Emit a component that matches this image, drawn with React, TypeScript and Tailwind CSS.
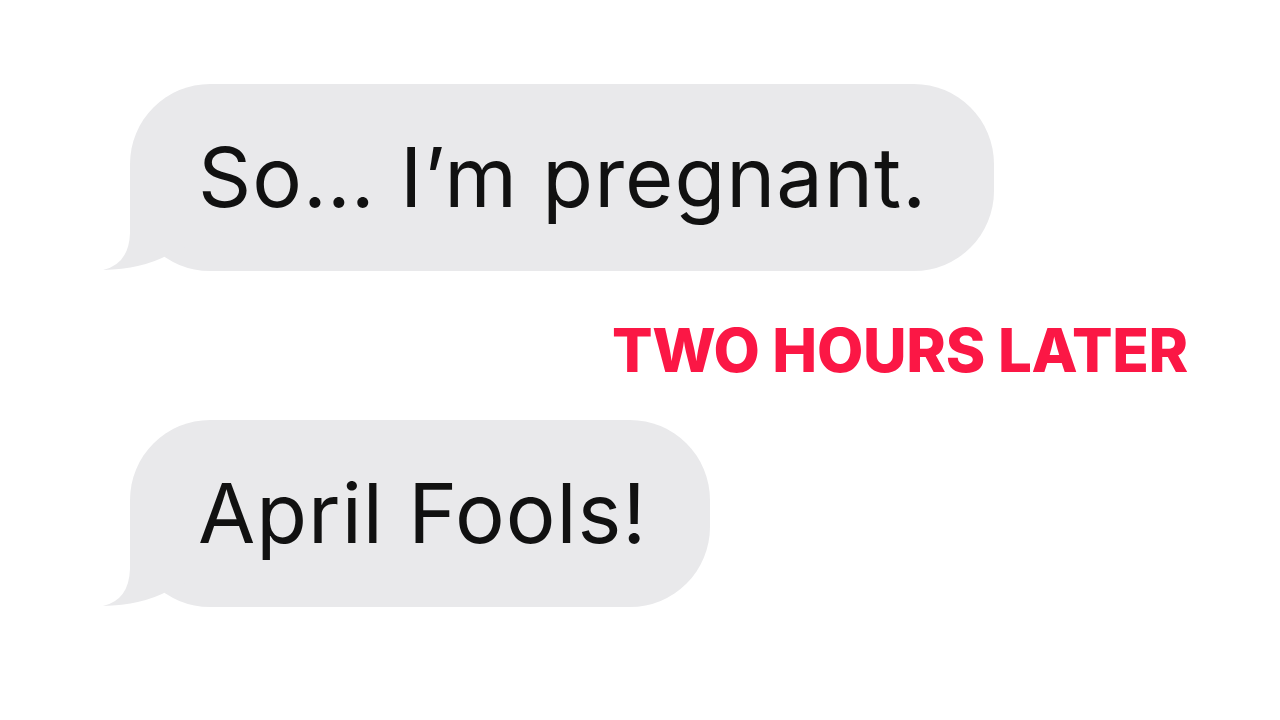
import React from "react";

// iMessage-style tail hanging off the bottom-left of a bubble
const Tail = () => (
  <svg
    className="absolute left-[-30px] bottom-0"
    width="110"
    height="90"
    viewBox="0 0 110 90"
  >
    <path d="M30 10 L30 52 Q29 83 3 89 Q42 88 68 74 L100 60 L100 10 Z" fill="#e9e9eb" />
  </svg>
);

const Bubble = ({ text, width }: { text: string; width: string }) => (
  <div className={`relative flex h-[187px] items-center rounded-[80px] bg-[#e9e9eb] pl-[68px] ${width}`}>
    <Tail />
    <span className="relative text-[83px] leading-none tracking-[1px] text-[#111] [font-family:Inter,'Liberation_Sans',sans-serif]">
      {text}
    </span>
  </div>
);

export default function App() {
  return (
    <div className="flex h-[720px] w-[1280px] flex-col bg-white pl-[130px] pt-[84px]">
      <Bubble text="So… I’m pregnant." width="w-[864px]" />

      <div className="mt-[49px] mr-[92px] self-end text-[60px] font-extrabold leading-none tracking-[-0.3px] text-[#fb1745] [font-family:Inter,'Liberation_Sans',sans-serif]">
        TWO HOURS LATER
      </div>

      <div className="mt-[40px]">
        <Bubble text="April Fools!" width="w-[580px]" />
      </div>
    </div>
  );
}
